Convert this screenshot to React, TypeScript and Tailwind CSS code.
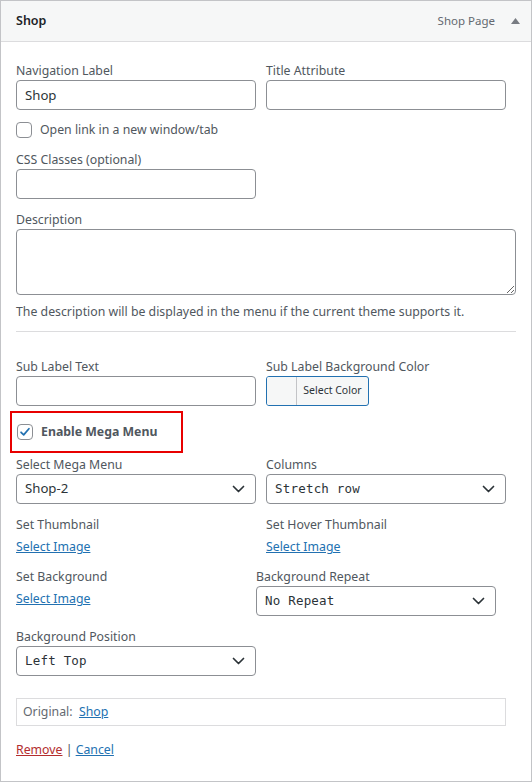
import React from 'react';

const labelCls = 'block text-[12.3px] leading-[19px] text-[#50575e]';
const inputCls =
  'block h-[30px] w-full rounded-[4px] border border-[#8c8f94] bg-white px-2 text-[13.2px] text-[#2c3338] outline-none';

function Chevron() {
  return (
    <svg className="h-[8px] w-[13px] text-[#2c3338]" viewBox="0 0 13 8" fill="none">
      <path d="M1.5 1.5l5 5 5-5" stroke="currentColor" strokeWidth={1.7} strokeLinecap="round" strokeLinejoin="round" />
    </svg>
  );
}

function FakeSelect({ value, mono = false, className = '' }: { value: string; mono?: boolean; className?: string }) {
  return (
    <div
      className={`flex h-[30px] items-center justify-between rounded-[4px] border border-[#8c8f94] bg-white pl-2 pr-[10px] text-[#2c3338] ${className}`}
    >
      <span
        className={mono ? 'text-[12.5px] tracking-[0.2px]' : 'text-[13.2px]'}
        style={mono ? { fontFamily: '"DejaVu Sans Mono", "Liberation Mono", monospace' } : undefined}
      >
        {value}
      </span>
      <Chevron />
    </div>
  );
}

function Checkbox({ checked = false }: { checked?: boolean }) {
  return (
    <span className="flex h-4 w-4 shrink-0 items-center justify-center rounded-[4px] border border-[#8c8f94] bg-white">
      {checked && (
        <svg className="h-[14px] w-[14px]" viewBox="0 0 16 16" fill="none">
          <path d="M3.5 8.3l3 3 6-7" stroke="#2271b1" strokeWidth={2} strokeLinecap="round" strokeLinejoin="round" />
        </svg>
      )}
    </span>
  );
}

function Field({ label, children, className = '' }: { label: string; children: React.ReactNode; className?: string }) {
  return (
    <div className={className}>
      <span className={labelCls}>{label}</span>
      {children}
    </div>
  );
}

function LinkText({ children, red = false }: { children: React.ReactNode; red?: boolean }) {
  return (
    <a href="#" className={`underline ${red ? 'text-[#b32d2e]' : 'text-[#2271b1]'}`}>
      {children}
    </a>
  );
}

export default function App() {
  return (
    <div
      className="h-[782px] w-[532px] overflow-hidden border border-[#c3c4c7] bg-white"
      style={{ fontFamily: '"Noto Sans", "Open Sans", sans-serif' }}
    >
      {/* Header */}
      <div className="flex h-[41px] items-center justify-between border-b border-[#dcdcde] bg-[#f6f7f7] pl-[15px] pr-[11px]">
        <span className="text-[12.5px] font-semibold text-[#1d2327]">Shop</span>
        <div className="flex items-center gap-[16px]">
          <span className="text-[11.5px] text-[#646970]">Shop Page</span>
          <svg className="h-[6px] w-[9px]" viewBox="0 0 9 6">
            <path d="M4.5 0L9 6H0z" fill="#787c82" />
          </svg>
        </div>
      </div>

      {/* Body */}
      <div className="pl-[15px] pr-[15px] pt-[19px]">
        <div className="grid grid-cols-[240px_240px] gap-x-[10px]">
          <Field label="Navigation Label">
            <input className={inputCls} defaultValue="Shop" />
          </Field>
          <Field label="Title Attribute">
            <input className={inputCls} />
          </Field>
        </div>

        <label className="mt-[10px] flex h-5 items-center gap-[8px] text-[12.3px] text-[#50575e]">
          <Checkbox />
          Open link in a new window/tab
        </label>

        <Field label="CSS Classes (optional)" className="mt-[10px] w-[240px]">
          <input className={inputCls} />
        </Field>

        <Field label="Description" className="mt-[11px]">
          <textarea className="block h-[66px] w-[500px] resize rounded-[4px] border border-[#8c8f94] bg-white px-2 py-1 text-[13.2px] outline-none" />
        </Field>
        <p className="mt-[7px] text-[12.3px] leading-[19px] text-[#50575e]">
          The description will be displayed in the menu if the current theme supports it.
        </p>
        <hr className="mt-[10px] w-[500px] border-t border-[#dcdcde]" />

        <div className="mt-[25px] grid grid-cols-[240px_240px] gap-x-[10px]">
          <Field label="Sub Label Text">
            <input className={inputCls} />
          </Field>
          <Field label="Sub Label Background Color">
            <div className="flex h-[30px] w-[103px] overflow-hidden rounded-[3px] border border-[#2271b1] bg-[#f6f7f7]">
              <span className="w-[30px] border-r border-[#c3c4c7] bg-[#f6f7f7]" />
              <span className="flex flex-1 items-center justify-center text-[10.5px] text-[#2c3338]">Select Color</span>
            </div>
          </Field>
        </div>

        {/* Highlighted mega menu toggle */}
        <div className="mt-[5px] -ml-[6px] flex h-[42px] w-[173px] items-center gap-[8px] border-2 border-[#e80000] pl-[5px]">
          <Checkbox checked />
          <span className="text-[12.3px] font-bold text-[#50575e]">Enable Mega Menu</span>
        </div>

        <div className="mt-[2px] grid grid-cols-[240px_240px] gap-x-[10px]">
          <Field label="Select Mega Menu">
            <FakeSelect value="Shop-2" />
          </Field>
          <Field label="Columns">
            <FakeSelect value="Stretch row" mono />
          </Field>
        </div>

        <div className="mt-[11px] grid grid-cols-[240px_240px] gap-x-[10px]">
          <div>
            <span className={labelCls}>Set Thumbnail</span>
            <span className="mt-[3px] block text-[12.3px] leading-[19px]">
              <LinkText>Select Image</LinkText>
            </span>
          </div>
          <div>
            <span className={labelCls}>Set Hover Thumbnail</span>
            <span className="mt-[3px] block text-[12.3px] leading-[19px]">
              <LinkText>Select Image</LinkText>
            </span>
          </div>
        </div>

        <div className="mt-[11px] flex">
          <div className="w-[240px] shrink-0">
            <span className={labelCls}>Set Background</span>
            <span className="mt-[3px] block text-[12.3px] leading-[19px]">
              <LinkText>Select Image</LinkText>
            </span>
          </div>
          <Field label="Background Repeat" className="w-[240px]">
            <FakeSelect value="No Repeat" mono />
          </Field>
        </div>

        <Field label="Background Position" className="mt-[11px] w-[240px]">
          <FakeSelect value="Left Top" mono />
        </Field>

        <div className="mt-[22px] flex h-[28px] w-[490px] items-center border border-[#dcdcde] px-[6px] text-[12.3px] text-[#646970]">
          Original:&nbsp;&nbsp;<LinkText>Shop</LinkText>
        </div>

        <div className="mt-[14px] text-[12.3px] leading-[19px] text-[#50575e]">
          <LinkText red>Remove</LinkText> | <LinkText>Cancel</LinkText>
        </div>
      </div>
    </div>
  );
}
